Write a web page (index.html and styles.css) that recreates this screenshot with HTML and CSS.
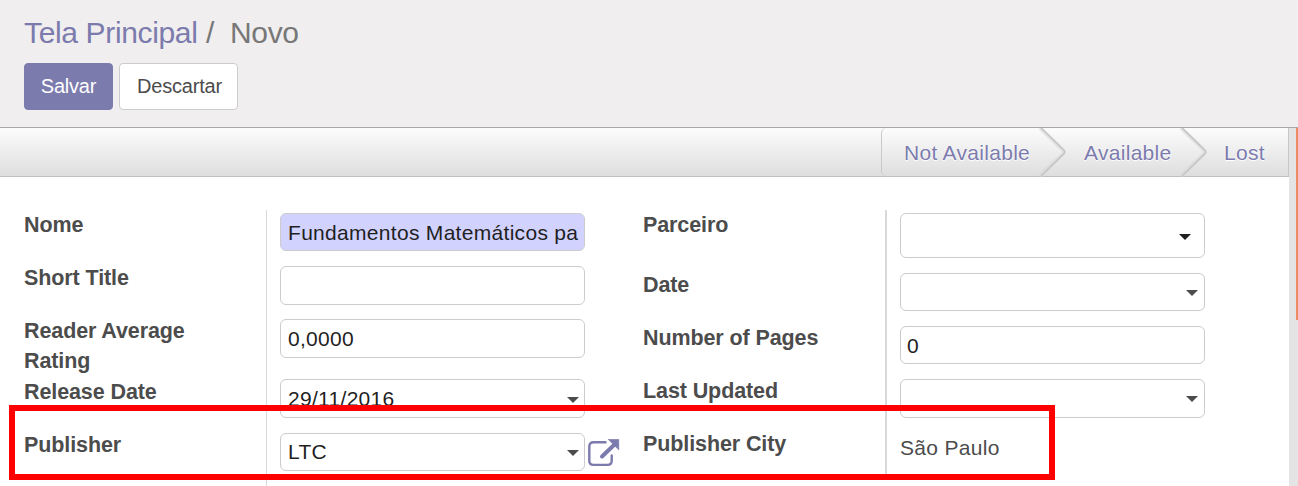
FILE: index.html
```html
<!DOCTYPE html>
<html lang="pt-BR">
<head>
<meta charset="utf-8">
<title>Novo</title>
<link rel="stylesheet" href="styles.css">
</head>
<body>
<header class="control-panel">
  <div class="breadcrumb"><a class="crumb">Tela Principal</a><span class="slash">/</span><span class="current">Novo</span></div>
  <div class="buttons">
    <button class="btn btn-primary">Salvar</button>
    <button class="btn btn-default">Descartar</button>
  </div>
</header>
<div class="content">
  <main class="sheet">
    <div class="statusbar">
      <div class="stages">
        <span class="stage first">Not Available</span>
        <svg class="arrow" viewBox="0 0 26 48"><path class="arrow-shade" d="M-1 0L22 22Q24 24 22 26L-1 48"/><path class="arrow-line" d="M0 0L23 22.5Q24 24 23 25.5L0 48"/></svg>
        <span class="stage second">Available</span>
        <svg class="arrow" viewBox="0 0 26 48"><path class="arrow-shade" d="M-1 0L22 22Q24 24 22 26L-1 48"/><path class="arrow-line" d="M0 0L23 22.5Q24 24 23 25.5L0 48"/></svg>
        <span class="stage third">Lost</span>
      </div>
    </div>
    <div class="groups">
      <section class="group left">
        <label>Nome</label><div class="cell"><div class="field required">Fundamentos Matemáticos pa</div></div>
        <label>Short Title</label><div class="cell"><div class="field tall"></div></div>
        <label>Reader Average Rating</label><div class="cell"><div class="field tall">0,0000</div></div>
        <label>Release Date</label><div class="cell"><div class="field tall">29/11/2016<i class="caret"></i></div></div>
        <label>Publisher</label><div class="cell"><div class="field relation">LTC<i class="caret"></i></div>
          <svg class="external" viewBox="0 0 32 28"><path class="icon-line" d="M17.5 3.3H5.5Q1.3 3.3 1.3 7.5V21.7Q1.3 25.9 5.5 25.9H19.5Q23.7 25.9 23.7 21.7V16.5"/><path class="icon-shaft" d="M14 17.5L26 6"/><path class="icon-head" d="M20 0.2H30.8V11Z"/></svg>
        </div>
      </section>
      <section class="group right">
        <label>Parceiro</label><div class="cell"><div class="field select"><i class="caret dark"></i></div></div>
        <label>Date</label><div class="cell"><div class="field"><i class="caret"></i></div></div>
        <label>Number of Pages</label><div class="cell"><div class="field">0</div></div>
        <label>Last Updated</label><div class="cell"><div class="field tall"><i class="caret"></i></div></div>
        <label>Publisher City</label><div class="cell"><span class="readonly">São Paulo</span></div>
      </section>
    </div>
  </main>
  <aside class="gutter"><div class="thumb"></div></aside>
</div>
<div class="highlight"></div>
</body>
</html>
```
FILE: styles.css
```css
* { box-sizing: border-box; }
body {
  margin: 0;
  height: 486px;
  overflow: hidden;
  position: relative;
  display: flex;
  flex-direction: column;
  background: #fff;
  color: #4c4c4c;
  font-family: "Liberation Sans", Arial, sans-serif;
  font-size: 21px;
  letter-spacing: 0.3px;
}
.control-panel {
  height: 128px;
  flex: none;
  padding: 15px 24px 0;
  background: #f0eeee;
  border-bottom: 1px solid #a8a8a8;
}
.breadcrumb {
  display: flex;
  height: 48px;
  font-size: 30px;
  line-height: 35px;
  letter-spacing: -0.35px;
  color: #777;
  white-space: pre;
}
.crumb { width: 182px; color: #7c7bad; }
.slash { width: 24px; }
.buttons { display: flex; gap: 6px; }
.btn {
  height: 47px;
  padding: 0 0 1px;
  border: 1px solid #7c7bad;
  border-radius: 4px;
  font: 20px "Liberation Sans", Arial, sans-serif;
  letter-spacing: -0.2px;
}
.btn-primary { width: 89px; background: #7c7bad; color: #fff; }
.btn-default { width: 119px; padding-left: 2px; background: #fff; color: #4c4c4c; border-color: #ccc; }
.content { flex: 1; min-height: 0; display: flex; }
.sheet { flex: 1; overflow: hidden; }
.statusbar {
  height: 49px;
  display: flex;
  justify-content: flex-end;
  background: linear-gradient(#fcfcfc, #dedede);
  border-bottom: 1px solid #c0c0c0;
}
.stages {
  width: 408px;
  display: flex;
  border: solid #c8c8c8;
  border-width: 0 1px;
  border-radius: 5px 0 0 5px;
}
.stage {
  color: #7c7bad;
  line-height: 49px;
  white-space: nowrap;
  text-shadow: 0 1px 1px #fff, 0 0 2px #fff;
}
.first { width: 159px; padding-left: 22px; }
.second { width: 115px; padding-left: 17px; }
.third { padding-left: 16px; }
.arrow { width: 26px; height: 48px; flex: none; overflow: visible; }
.arrow path { fill: none; }
.arrow-shade { stroke: #d9d9d9; stroke-width: 4; opacity: 0.6; }
.arrow-line { stroke: #c5c5c5; stroke-width: 1.6; }
.groups { display: flex; gap: 34px; padding: 33px 0 0 24px; }
.group { display: grid; }
.left {
  width: 585px;
  grid-template-columns: 242px 1fr;
  grid-template-rows: 56px 53px 61px 53px 60px;
}
.right {
  width: 562px;
  grid-template-columns: 242px 1fr;
  grid-template-rows: 63px 53px 53px 53px 47px;
}
.group label {
  padding-right: 60px;
  font-size: 21.5px;
  font-weight: bold;
  letter-spacing: -0.1px;
  line-height: 30px;
}
.group label:not(:first-child) { margin-top: -3px; }
.cell { display: flex; align-items: flex-start; border-left: 1px solid #d9d9d9; padding-left: 13px; }
.right .cell { border-left-width: 2px; }
.cell:nth-of-type(1) { padding-top: 3px; }
.left .cell:nth-of-type(4) { margin-top: -1px; }
.field {
  position: relative;
  width: 305px;
  height: 38px;
  padding: 0 7px;
  border: 1px solid #ccc;
  border-radius: 6px;
  background: #fff;
  color: #1f1f1f;
  line-height: 38px;
  white-space: nowrap;
  overflow: hidden;
}
.right .field { padding: 0 6px; }
.tall { height: 39px; }
.select { height: 45px; }
.relation { line-height: 36px; }
.required { background: #d2d2ff; }
.caret {
  position: absolute;
  right: 6px;
  top: 16px;
  border: solid transparent;
  border-width: 6px 6px 0;
  border-top-color: #4c4c4c;
}
.left .caret { right: 5px; }
.left .tall .caret { top: 17px; }
.caret.dark { right: 13px; top: 20px; border-top-color: #1f1f1f; }
.external { width: 32px; height: 28px; margin: 6px 0 0 3px; flex: none; }
.external path { fill: none; stroke: #7c7bad; }
.icon-line { stroke-width: 2.4; stroke-linecap: round; }
.icon-shaft { stroke-width: 4; stroke-linecap: round; }
.external .icon-head { fill: #7c7bad; stroke-width: 0.5; }
.readonly { line-height: 32px; }
.gutter { width: 9px; background: #e4e4e4; }
.thumb { width: 2px; height: 192px; margin-left: 7px; background: #f08a63; }
.highlight {
  position: absolute;
  left: 9px;
  top: 405px;
  width: 1046px;
  height: 75px;
  border: 6px solid #f00;
}
```
